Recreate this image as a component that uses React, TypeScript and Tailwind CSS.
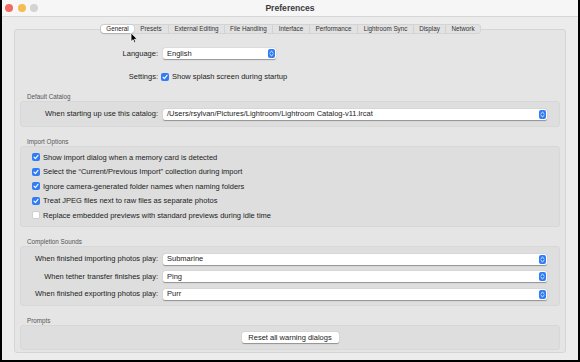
import React from "react";

const tabs: { name: string; w: string }[] = [
  { name: "General", w: "w-[33px]" },
  { name: "Presets", w: "w-[34px]" },
  { name: "External Editing", w: "w-[56px]" },
  { name: "File Handling", w: "w-[48px]" },
  { name: "Interface", w: "w-[37px]" },
  { name: "Performance", w: "w-[48px]" },
  { name: "Lightroom Sync", w: "w-[56px]" },
  { name: "Display", w: "w-[32px]" },
  { name: "Network", w: "w-[35px]" },
];

const importOptions: { text: string; checked: boolean }[] = [
  { text: "Show import dialog when a memory card is detected", checked: true },
  { text: "Select the \u201cCurrent/Previous Import\u201d collection during import", checked: true },
  { text: "Ignore camera-generated folder names when naming folders", checked: true },
  { text: "Treat JPEG files next to raw files as separate photos", checked: true },
  { text: "Replace embedded previews with standard previews during idle time", checked: false },
];

const sounds: { label: string; value: string }[] = [
  { label: "When finished importing photos play:", value: "Submarine" },
  { label: "When tether transfer finishes play:", value: "Ping" },
  { label: "When finished exporting photos play:", value: "Purr" },
];

const Stepper = () => (
  <div className="w-[7px] h-[9px] mr-[1px] rounded-[2px] bg-[#2f7cf6] flex items-center justify-center">
    <svg width="5" height="7" viewBox="0 0 5 7" fill="none">
      <path d="M1 2.6 L2.5 1.2 L4 2.6" stroke="white" strokeWidth="0.9" strokeLinecap="round" strokeLinejoin="round" />
      <path d="M1 4.4 L2.5 5.8 L4 4.4" stroke="white" strokeWidth="0.9" strokeLinecap="round" strokeLinejoin="round" />
    </svg>
  </div>
);

type PopupProps = { value: string; width: string };

const Popup: React.FC<PopupProps> = ({ value, width }) => (
  <div
    className={`${width} h-[11px] bg-white rounded-[2px] shadow-[0_0.5px_1px_rgba(0,0,0,0.35)] flex items-center justify-between pl-[4px]`}
  >
    <span className="text-[7.5px] leading-none text-[#222]">{value}</span>
    <Stepper />
  </div>
);

const Checkbox = ({ checked }: { checked: boolean }) =>
  checked ? (
    <div className="w-[8px] h-[8px] rounded-[2px] bg-[#2f7cf6] flex items-center justify-center shrink-0">
      <svg width="6" height="6" viewBox="0 0 6 6" fill="none">
        <path d="M1 3.1 L2.4 4.6 L5 1.3" stroke="white" strokeWidth="1.1" strokeLinecap="round" strokeLinejoin="round" />
      </svg>
    </div>
  ) : (
    <div className="w-[8px] h-[8px] rounded-[2px] bg-white border border-[#cfcfcf] shrink-0" />
  );

const SectionLabel = ({ text }: { text: string }) => (
  <div className="h-[8px] leading-[8px] pl-[12px] text-[6.3px] text-[#555]">{text}</div>
);

const Group = ({ children, className }: { children: React.ReactNode; className: string }) => (
  <div className={`mx-[5px] bg-[#dedede] border border-[#d8d8d8] rounded-[3px] ${className}`}>
    {children}
  </div>
);

export default function App() {
  return (
    <div className="w-[580px] h-[362px] bg-[#ececec] border-x-2 border-b-2 border-black flex flex-col overflow-hidden relative font-['Liberation_Sans',Arial,sans-serif]">
      {/* title bar */}
      <div className="h-[17px] shrink-0 bg-[#f6f6f6] border-b border-[#d6d6d6] grid grid-cols-[1fr_auto_1fr] items-center">
        <div className="flex items-center gap-[4.5px] pl-[3px]">
          <div className="w-[8px] h-[8px] rounded-full bg-[#ee6a5f]" />
          <div className="w-[8px] h-[8px] rounded-full bg-[#f5bd4f]" />
          <div className="w-[8px] h-[8px] rounded-full bg-[#d3d3d3]" />
        </div>
        <div className="text-[8.6px] font-bold text-[#3b3b3b] leading-none">Preferences</div>
        <div />
      </div>

      {/* tabs */}
      <div className="relative z-10 mt-[7px] ml-[98px] flex h-[10px] w-fit rounded-[3px] bg-[#e2e2e2] border border-[#d4d4d4]">
        {tabs.map((t, i) => (
          <div
            key={t.name}
            className={`${t.w} flex items-center justify-center text-[6.3px] leading-none ${
              i === 0
                ? "bg-white rounded-[3px] shadow-[0_0.5px_1.5px_rgba(0,0,0,0.3)] text-[#222]"
                : "text-[#333]"
            } ${i > 1 ? "border-l border-[#d2d2d2]" : ""}`}
          >
            {t.name}
          </div>
        ))}
      </div>

      {/* panel */}
      <div className="-mt-[5px] ml-[12px] w-[552px] h-[324px] bg-[#e5e5e5] border border-[#d5d5d5] rounded-[3px] flex flex-col text-[7.5px] text-[#222]">
        <div className="mt-[18px] flex items-center">
          <div className="w-[143px] text-right leading-none">Language:</div>
          <div className="ml-[5px]">
            <Popup value="English" width="w-[113px]" />
          </div>
        </div>

        <div className="mt-[13px] flex items-center h-[10px]">
          <div className="w-[143px] text-right leading-none">Settings:</div>
          <div className="ml-[3px] flex items-center gap-[3px]">
            <Checkbox checked />
            <span className="leading-none">Show splash screen during startup</span>
          </div>
        </div>

        <div className="mt-[11px]">
          <SectionLabel text="Default Catalog" />
          <Group className="h-[26px] flex items-center">
            <div className="w-[137px] text-right leading-none">When starting up use this catalog:</div>
            <div className="ml-[5px]">
              <Popup value="/Users/rsylvan/Pictures/Lightroom/Lightroom Catalog-v11.lrcat" width="w-[384px]" />
            </div>
          </Group>
        </div>

        <div className="mt-[11px]">
          <SectionLabel text="Import Options" />
          <Group className="h-[81px] pt-[3px]">
            {importOptions.map((o) => (
              <div key={o.text} className="h-[14.5px] flex items-center gap-[3px] pl-[11px]">
                <Checkbox checked={o.checked} />
                <span className="leading-none">{o.text}</span>
              </div>
            ))}
          </Group>
        </div>

        <div className="mt-[11px]">
          <SectionLabel text="Completion Sounds" />
          <Group className="h-[60px] pt-[6.5px] flex flex-col gap-[6.5px]">
            {sounds.map((s) => (
              <div key={s.label} className="flex items-center h-[11px]">
                <div className="w-[137px] text-right leading-none">{s.label}</div>
                <div className="ml-[5px]">
                  <Popup value={s.value} width="w-[384px]" />
                </div>
              </div>
            ))}
          </Group>
        </div>

        <div className="mt-[11px]">
          <SectionLabel text="Prompts" />
          <Group className="h-[25px] flex items-center justify-center">
            <div className="w-[97px] h-[10.5px] bg-white rounded-[2px] shadow-[0_0.5px_1px_rgba(0,0,0,0.35)] flex items-center justify-center leading-none">
              Reset all warning dialogs
            </div>
          </Group>
        </div>
      </div>

      {/* mouse pointer */}
      <svg className="absolute left-[128px] top-[32px] z-20" width="8" height="12" viewBox="0 0 8 12">
        <path d="M1 0.8 L1 9.6 L3.1 7.7 L4.5 10.9 L5.9 10.3 L4.5 7.2 L7.3 7.2 Z" fill="black" stroke="white" strokeWidth="0.8" strokeLinejoin="round" />
      </svg>
    </div>
  );
}
